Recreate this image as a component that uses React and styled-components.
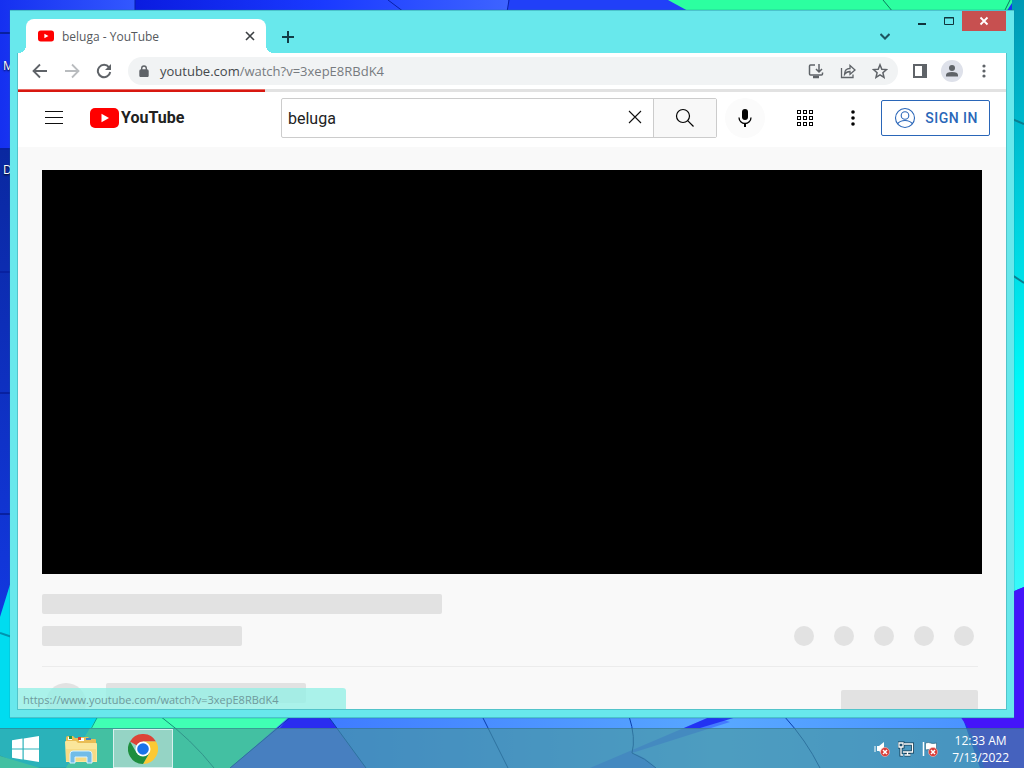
import React from "react";
import styled, { createGlobalStyle } from "styled-components";

const ui = `"Open Sans", "Noto Sans", sans-serif`;
const roboto = `Roboto, "Liberation Sans", sans-serif`;

const GlobalStyle = createGlobalStyle`
  *, *::before, *::after { box-sizing: border-box; }
  body { margin: 0; font-family: ${ui}; }
  button, input { font: inherit; color: inherit; margin: 0; padding: 0; border: 0; background: none; }
  button { cursor: pointer; }
  svg { display: block; flex: none; }
`;

const Desktop = styled.div`
  position: relative;
  display: flex;
  flex-direction: column;
  height: 100vh;
  overflow: hidden;
  background: #1a35f0;
`;

const Wallpaper = styled.svg`
  position: absolute;
  inset: 0;
  width: 100%;
  height: 100%;
`;

const Workspace = styled.div`
  position: relative;
  flex: 1;
  min-height: 0;
  padding: 10px;
  display: flex;
`;

const DesktopLabel = styled.span`
  position: absolute;
  left: 3px;
  top: ${(p) => p.$top}px;
  font-size: 12px;
  line-height: 16px;
  color: #fff;
  text-shadow: 0 1px 2px #000;
`;

const BrowserWindow = styled.main`
  position: relative;
  flex: 1;
  min-width: 0;
  display: flex;
  flex-direction: column;
  padding: 0 8px 8px;
  background: #68e8ec;
  border: solid #4cc3cc;
  border-width: 1px 0;
  box-shadow: 0 0 1px #1b7f8c;
`;

const TabStrip = styled.div`
  display: flex;
  align-items: flex-end;
  height: 42px;
  padding-left: 8px;
`;

const Tab = styled.div`
  position: relative;
  display: flex;
  align-items: center;
  width: 240px;
  height: 34px;
  padding: 0 8px 0 12px;
  border-radius: 8px 8px 0 0;
  background: #fff;
  font-size: 12px;
  color: #55595d;

  &::before,
  &::after {
    content: "";
    position: absolute;
    bottom: 0;
    width: 8px;
    height: 8px;
  }
  &::before {
    left: -8px;
    background: radial-gradient(circle at 0 0, transparent 8px, #fff 8px);
  }
  &::after {
    right: -8px;
    background: radial-gradient(circle at 100% 0, transparent 8px, #fff 8px);
  }
`;

const TabTitle = styled.span`
  flex: 1;
  margin-left: 8px;
`;

const IconButton = styled.button`
  display: flex;
  align-items: center;
  justify-content: center;
  flex: none;
  width: ${(p) => p.$size || 32}px;
  height: ${(p) => p.$size || 32}px;
  border-radius: 50%;
  color: ${(p) => p.$color || "#5f6368"};
  background: ${(p) => p.$fill || "none"};
`;

const NewTab = styled(IconButton)`
  margin-left: 6px;
`;

const TabSearch = styled(IconButton)`
  margin-left: auto;
  margin-right: 7px;
`;

const WindowControls = styled.div`
  display: flex;
  align-self: flex-start;
`;

const WindowButton = styled.button`
  display: flex;
  align-items: center;
  justify-content: center;
  width: ${(p) => (p.$close ? 44 : 27)}px;
  height: 20px;
  color: ${(p) => (p.$close ? "#fff" : "#10343c")};
  background: ${(p) => (p.$close ? "#c75050" : "none")};
`;

const Client = styled.div`
  position: relative;
  flex: 1;
  min-height: 0;
  display: flex;
  flex-direction: column;
  overflow: hidden;
  background: #f9f9f9;
  box-shadow: 0 0 0 1px #52c4ca;
  clip-path: inset(0 -1px -1px -1px);
`;

const Toolbar = styled.div`
  display: flex;
  align-items: center;
  flex: none;
  height: 36px;
  padding: 0 6px;
  background: #fff;
`;

const Omnibox = styled.div`
  flex: 1;
  display: flex;
  align-items: center;
  height: 28px;
  margin: 0 6px 0 8px;
  padding-right: 2px;
  border-radius: 14px;
  background: #f1f3f4;
  color: #5f6368;
`;

const LockSlot = styled.span`
  display: flex;
  justify-content: center;
  width: 32px;
`;

const Address = styled.div`
  flex: 1;
  font-size: 13px;
  line-height: 20px;
  color: #777b80;
  white-space: nowrap;
`;

const Domain = styled.span`
  color: #45494d;
`;

const Avatar = styled.span`
  display: flex;
  align-items: center;
  justify-content: center;
  width: 22px;
  height: 22px;
  border-radius: 50%;
  background: #dee1ea;
`;

const Masthead = styled.header`
  position: relative;
  flex: none;
  display: flex;
  align-items: center;
  gap: 8px;
  height: 58px;
  padding: 0 16px;
  background: #fff;
  font-family: ${roboto};
`;

const Progress = styled.div`
  position: absolute;
  left: 0;
  right: 0;
  top: 0;
  height: 3px;
  background: #e2e2e2;

  &::after {
    content: "";
    display: block;
    width: 25%;
    height: 100%;
    background: linear-gradient(#e86a64 1px, #d81810 1px);
  }
`;

const Logo = styled.a`
  display: flex;
  align-items: center;
  gap: 2px;
  width: 91px;
  margin-left: 8px;
  color: #212121;
  text-decoration: none;
`;

const Wordmark = styled.span`
  font-weight: 700;
  font-size: 16px;
  line-height: 24px;
`;

const Search = styled.form`
  flex: 1;
  display: flex;
  height: 40px;
  margin-left: 92px;
  border: 1px solid #ccc;
  border-radius: 2px;
`;

const SearchField = styled.input`
  flex: 1;
  min-width: 0;
  padding: 0 6px;
  font-size: 16px;
  color: #222;
  outline: 0;
`;

const SearchButton = styled.button`
  display: flex;
  align-items: center;
  justify-content: center;
  width: 63px;
  border-left: 1px solid #ccc;
  background: #f8f8f8;
`;

const MastheadEnd = styled.div`
  display: flex;
  align-items: center;
  gap: 8px;
  margin-left: 12px;
`;

const SignIn = styled.a`
  display: flex;
  align-items: center;
  gap: 8px;
  height: 36px;
  padding: 0 11px;
  border: 1px solid #2a66b8;
  border-radius: 2px;
  color: #2a66b8;
  font-size: 14px;
  font-weight: 500;
  letter-spacing: 0.5px;
  text-decoration: none;
  white-space: nowrap;
`;

const WatchPage = styled.section`
  flex: none;
  display: flex;
  flex-direction: column;
  padding: 23px 24px 0;
`;

const Player = styled.div`
  aspect-ratio: 235 / 101;
  background: #000;
`;

const TitleBone = styled.div`
  height: 20px;
  width: ${(p) => p.$width}px;
  border-radius: 2px;
  background: #e2e2e2;
`;

const MetaRow = styled.div`
  display: flex;
  justify-content: space-between;
  margin-top: 12px;
`;

const Title = styled(TitleBone)`
  margin-top: 20px;
`;

const Actions = styled.div`
  display: flex;
  gap: 20px;
  padding-right: 8px;
`;

const ActionBone = styled.span`
  width: 20px;
  height: 20px;
  border-radius: 50%;
  background: #e2e2e2;
`;

const OwnerRow = styled.div`
  display: flex;
  align-items: flex-start;
  margin: 20px 4px 0 0;
  padding: 16px 0 0 4px;
  border-top: 1px solid #ececec;
`;

const OwnerAvatar = styled.span`
  width: 40px;
  height: 40px;
  margin-right: 20px;
  border-radius: 50%;
  background: #e2e2e2;
`;

const SubscribeBone = styled.span`
  width: 137px;
  height: 36px;
  margin: 7px 0 0 auto;
  border-radius: 2px;
  background: #e2e2e2;
`;

const StatusBubble = styled.div`
  position: absolute;
  left: 0;
  bottom: 0;
  width: 328px;
  height: 21px;
  padding-left: 5px;
  border-radius: 0 3px 0 0;
  background: rgba(150, 240, 230, 0.8);
  font-size: 11px;
  line-height: 23px;
  color: #6f9a9c;
  white-space: nowrap;
`;

const Taskbar = styled.nav`
  position: relative;
  flex: none;
  display: flex;
  align-items: center;
  height: 40px;
  border-top: 1px solid rgba(40, 90, 120, 0.35);
  background: rgba(70, 150, 150, 0.6);
`;

const TaskButton = styled.button`
  display: flex;
  align-items: center;
  justify-content: center;
  width: ${(p) => p.$width}px;
  height: 39px;
  border: ${(p) => (p.$active ? "1px solid #d8f0ee" : "0")};
  background: ${(p) => (p.$active ? "rgba(205, 225, 220, 0.6)" : "none")};
`;

const Tray = styled.div`
  display: flex;
  align-items: center;
  gap: 8px;
  margin-left: auto;
  padding-right: 15px;
`;

const Clock = styled.time`
  margin-left: 6px;
  font-size: 12px;
  line-height: 17px;
  text-align: center;
  color: #fff;
`;

function WallpaperArt() {
  return (
    <Wallpaper viewBox="0 0 1024 768" preserveAspectRatio="none" aria-hidden="true">
      <defs>
        <linearGradient id="top1"><stop offset="0" stopColor="#1530f0" /><stop offset="1" stopColor="#3358ff" /></linearGradient>
        <linearGradient id="top2"><stop offset="0" stopColor="#0a1be0" /><stop offset=".5" stopColor="#1a3aff" /><stop offset="1" stopColor="#3e64ff" /></linearGradient>
        <linearGradient id="left" x1="0" y1="0" x2="0" y2="1"><stop offset="0" stopColor="#0a28a0" /><stop offset="1" stopColor="#1238e0" /></linearGradient>
        <linearGradient id="right" x1="0" y1="0" x2="0" y2="1"><stop offset="0" stopColor="#0098b4" /><stop offset=".3" stopColor="#00c8d8" /><stop offset=".65" stopColor="#00f8f8" /><stop offset="1" stopColor="#38f8fa" /></linearGradient>
        <linearGradient id="low"><stop offset="0" stopColor="#3f7cff" /><stop offset=".6" stopColor="#58a8ff" /><stop offset="1" stopColor="#4a92ff" /></linearGradient>
      </defs>
      <path d="M0 0H135V12H12V149H0Z" fill="url(#top1)" />
      <path d="M135 0H510V12H135Z" fill="url(#top2)" />
      <path d="M508 0H672L690 12H508Z" fill="#2140f8" />
      <path d="M668 0H1014L1006 12H690Z" fill="#2cffa0" />
      <path d="M1012 0H1024V587L1012 592Z" fill="url(#right)" />
      <path d="M1012 119L1024 124M1012 275L1024 283" stroke="#0a7f90" strokeWidth="2" />
      <path d="M1010 0L1004 12M883 0L893 12" stroke="#0b7a5c" strokeWidth="1" />
      <path d="M388 0L404 12M509 0L507 12M135 0V12" stroke="#0820a8" strokeWidth="1" />
      <path d="M0 149H12V583L0 617Z" fill="url(#left)" />
      <path d="M0 33H12M0 149H12M0 272H12M0 393H12M0 514H12" stroke="#0820a0" strokeWidth="2" />
      <path d="M0 617L12 578V700H110V768H0Z" fill="#00dcf0" />
      <path d="M0 633L12 637" stroke="#0094b0" strokeWidth="2" />
      <path d="M98 716H292L230 768H66Z" fill="#40ffb4" />
      <path d="M0 756L30 768H70L98 716" fill="none" stroke="#0a9f98" strokeWidth="1" />
      <path d="M0 756L40 768H0Z" fill="#40ffb4" />
      <path d="M66 768L90 728H120V768Z" fill="#40ffb4" />
      <path d="M160 716Q192 740 214 768" fill="none" stroke="#129078" strokeWidth="1" />
      <path d="M290 716H330L366 768H230Z" fill="#4a5cff" />
      <path d="M290 716H330L338 728H280Z" fill="#2a2cf0" />
      <path d="M328 716H962L980 768H366Z" fill="url(#low)" />
      <path d="M712 716L590 768H656Q645 756 632 753L730 722Z" fill="#3c66ff" opacity=".7" />
      <path d="M712 716H740L700 728H684Z" fill="#1a20f0" opacity=".8" />
      <path d="M292 716L230 768M328 716L366 768M482 716L508 768M629 716Q636 738 632 753M632 753Q645 758 656 768M784 716Q806 740 820 768" fill="none" stroke="#0a3eac" strokeWidth="1" />
      <path d="M1012 592L1024 587V768H984Q978 740 960 716H1012Z" fill="#4414fa" />
    </Wallpaper>
  );
}

const YouTubeMark = ({ width, height }) => (
  <svg width={width} height={height} viewBox="0 0 29 20" aria-hidden="true">
    <rect width="29" height="20" rx="5" fill="#f00" />
    <path d="M11.5 5.7v8.6L19 10z" fill="#fff" />
  </svg>
);

const Icon = ({ size = 16, box = 16, width = 2, children }) => (
  <svg width={size} height={size} viewBox={`0 0 ${box} ${box}`} fill="none" stroke="currentColor" strokeWidth={width} aria-hidden="true">
    {children}
  </svg>
);

const dots = [3, 8, 13];

export default function App() {
  return (
    <>
      <GlobalStyle />
      <Desktop>
        <WallpaperArt />
        <Workspace>
          <DesktopLabel $top={58}>M</DesktopLabel>
          <DesktopLabel $top={162}>D</DesktopLabel>
          <BrowserWindow>
            <TabStrip>
              <Tab>
                <YouTubeMark width={16} height={12} />
                <TabTitle>beluga - YouTube</TabTitle>
                <IconButton $size={16} $color="#3c4043" aria-label="Close tab">
                  <Icon size={10} box={10} width={1.6}><path d="M1 1l8 8M9 1L1 9" /></Icon>
                </IconButton>
              </Tab>
              <NewTab $color="#123c46" aria-label="New tab">
                <Icon size={12} box={12}><path d="M6 0v12M0 6h12" /></Icon>
              </NewTab>
              <TabSearch $color="#1c5560" aria-label="Search tabs">
                <Icon size={10} box={10}><path d="M.5 2L5 6.500l4.500-4.500" /></Icon>
              </TabSearch>
              <WindowControls>
                <WindowButton aria-label="Minimize">
                  <Icon size={12} box={12}><path d="M2 9h8" /></Icon>
                </WindowButton>
                <WindowButton aria-label="Maximize">
                  <Icon size={12} box={12} width={1}><path d="M1.500 2.500h9v7h-9zM1 3h10" /></Icon>
                </WindowButton>
                <WindowButton $close aria-label="Close">
                  <Icon size={10} box={10} width={1.800}><path d="M1.500 1.500l7 7M8.500 1.500l-7 7" /></Icon>
                </WindowButton>
              </WindowControls>
            </TabStrip>
            <Client>
              <Toolbar>
                <IconButton aria-label="Back"><Icon width={1.800}><path d="M15 8H2M8 1.500L1.500 8 8 14.500" /></Icon></IconButton>
                <IconButton $color="#b9bcbf" aria-label="Forward"><Icon width={1.800}><path d="M1 8h13M8 1.500L14.500 8 8 14.500" /></Icon></IconButton>
                <IconButton aria-label="Reload">
                  <Icon><path d="M13 4.300A6.200 6.200 0 1 0 14.200 9" /><path d="M15 1v6H9z" fill="currentColor" stroke="none" /></Icon>
                </IconButton>
                <Omnibox>
                  <LockSlot>
                    <Icon size={12} box={12} width={1.400}><rect x="2" y="5" width="8" height="6.500" rx="1" fill="currentColor" /><path d="M3.700 5V3.300a2.300 2.300 0 0 1 4.600 0V5" /></Icon>
                  </LockSlot>
                  <Address><Domain>youtube.com</Domain>/watch?v=3xepE8RBdK4</Address>
                  <IconButton aria-label="Install">
                    <Icon width={1.500}><path d="M7 2H2.500Q1.500 2 1.500 3v8q0 1 1 1h11q1 0 1-1V9.500M11 1v7.500M8 6l3 3 3-3" /><path d="M5 14h6" strokeWidth="2.500" /></Icon>
                  </IconButton>
                  <IconButton aria-label="Share">
                    <Icon width={1.300}><path d="M1.500 5v9.500h11.500V11.500M4.500 11.500Q4.500 5.500 10 5.500V2.500L15 7l-5 4.300V8.500Q6.500 8.500 4.500 11.500z" /></Icon>
                  </IconButton>
                  <IconButton aria-label="Bookmark">
                    <Icon width={1.500}><path d="M8 1.800l1.800 4.400 4.700.4-3.600 3.100 1.100 4.600L8 11.800l-4 2.500 1.100-4.600L1.500 6.600l4.700-.4z" /></Icon>
                  </IconButton>
                </Omnibox>
                <IconButton aria-label="Side panel">
                  <Icon size={14} box={14}><rect x="1" y="1" width="12" height="12" /><path d="M9 1h4v12H9z" fill="currentColor" stroke="none" /></Icon>
                </IconButton>
                <IconButton aria-label="Profile">
                  <Avatar><Icon size={14} box={14}><g fill="currentColor" stroke="none"><circle cx="7" cy="4" r="3" /><path d="M1 12.500V11q0-3 6-3t6 3v1.500z" /></g></Icon></Avatar>
                </IconButton>
                <IconButton aria-label="Chrome menu">
                  <Icon>{dots.map((y) => <circle key={y} cx="8" cy={y} r="1.600" fill="currentColor" stroke="none" />)}</Icon>
                </IconButton>
              </Toolbar>

              <Masthead>
                <Progress />
                <IconButton $size={40} $color="#0f0f0f" aria-label="Guide">
                  <Icon size={18} box={18} width={1}><path d="M0 2.500h18M0 8.500h18M0 14.500h18" /></Icon>
                </IconButton>
                <Logo href="#home" aria-label="YouTube home">
                  <YouTubeMark width={29} height={20} />
                  <Wordmark>YouTube</Wordmark>
                </Logo>
                <Search onSubmit={(e) => e.preventDefault()}>
                  <SearchField aria-label="Search" defaultValue="beluga" />
                  <IconButton type="button" $size={36} $color="#111" aria-label="Clear">
                    <Icon size={14} box={14} width={1.100}><path d="M1 1l12 12M13 1L1 13" /></Icon>
                  </IconButton>
                  <SearchButton aria-label="Search">
                    <Icon size={20} box={20} width={1.200}><circle cx="8" cy="8" r="6.500" /><path d="M12.700 12.700L18.500 18.500" /></Icon>
                  </SearchButton>
                </Search>
                <IconButton $size={40} $color="#030303" $fill="#fbfbfb" aria-label="Voice search">
                  <Icon size={20} box={20} width={1.300}><rect x="7" y="1" width="6" height="11" rx="3" fill="currentColor" stroke="none" /><path d="M4 9.500a6 6 0 0 0 12 0M10 15.500V19" /><path d="M10 15.500V19" strokeWidth="2" /></Icon>
                </IconButton>
                <MastheadEnd>
                  <IconButton $size={40} $color="#030303" aria-label="Apps">
                    <Icon size={16} box={16} width={1}>
                      {[0, 6, 12].map((y) => [0, 6, 12].map((x) => <rect key={`${x}-${y}`} x={x + 0.5} y={y + 0.5} width="3" height="3" />))}
                    </Icon>
                  </IconButton>
                  <IconButton $size={40} $color="#030303" aria-label="Settings">
                    <Icon>{[2, 8, 14].map((y) => <circle key={y} cx="8" cy={y} r="1.800" fill="currentColor" stroke="none" />)}</Icon>
                  </IconButton>
                  <SignIn href="#signin">
                    <Icon size={24} box={24} width={1.100}><circle cx="12" cy="12" r="9.500" /><circle cx="12" cy="9.500" r="3.800" /><path d="M4.500 17.800Q7 14.500 12 14.500t7.500 3.300" /></Icon>
                    SIGN IN
                  </SignIn>
                </MastheadEnd>
              </Masthead>

              <WatchPage>
                <Player />
                <Title $width={400} />
                <MetaRow>
                  <TitleBone $width={200} />
                  <Actions>{[0, 1, 2, 3, 4].map((n) => <ActionBone key={n} />)}</Actions>
                </MetaRow>
                <OwnerRow>
                  <OwnerAvatar />
                  <TitleBone $width={200} />
                  <SubscribeBone />
                </OwnerRow>
              </WatchPage>
              <StatusBubble>https://www.youtube.com/watch?v=3xepE8RBdK4</StatusBubble>
            </Client>
          </BrowserWindow>
        </Workspace>

        <Taskbar>
          <TaskButton $width={49} aria-label="Start">
            <svg width="28" height="26" viewBox="0 0 28 26" fill="#fff" aria-hidden="true"><path d="M1 4.200l10.500-1.600v9.800H1zM12.700 2.400L28 0v12.400H12.700zM1 13.600h10.500v9.800L1 21.800zM12.700 13.600H28V26l-15.300-2.400z" /></svg>
          </TaskButton>
          <TaskButton $width={64} aria-label="File Explorer">
            <svg width="34" height="30" viewBox="0 0 34 30" aria-hidden="true">
              <path d="M2 4q0-2 2-2h5l2 2h4V3h9l2 2h5q1 0 1 1v19H2z" fill="#e9bd55" />
              <path d="M4 3h4v3H4zM15 4h5v3h-5z" fill="#fff" />
              <path d="M5 2h3v3H5z" fill="#279b45" /><path d="M14 3h3v3h-3z" fill="#d64032" /><path d="M22 4h5v2h-5z" fill="#3f83c5" />
              <path d="M1 8q0-1 1-1h10l2 2h18q1 0 1 1v18H2z" fill="#fae69b" />
              <path d="M2 15h30v12H2z" fill="#f3d477" opacity=".6" />
              <path d="M6 29V20q0-3 3-3h16q3 0 3 3v9h-5v-6H11v6z" fill="#72bce8" stroke="#d8f2ff" />
            </svg>
          </TaskButton>
          <TaskButton $width={60} $active aria-label="Google Chrome">
            <svg width="30" height="30" viewBox="0 0 30 30" aria-hidden="true">
              <path d="M15 15L2 7.500A15 15 0 0 1 28 7.500H15z" fill="#dc4437" />
              <path d="M15 7.500H28A15 15 0 0 1 15 30l6.500-11.250z" fill="#fcc934" />
              <path d="M2 7.500A15 15 0 0 0 15 30l6.500-11.250L15 15l-6.500 3.750z" fill="#1e8e3e" />
              <circle cx="15" cy="15" r="7.500" fill="#fff" /><circle cx="15" cy="15" r="5.800" fill="#1a73e8" />
            </svg>
          </TaskButton>
          <Tray>
            <svg width="16" height="16" viewBox="0 0 16 16" role="img" aria-label="Volume muted">
              <path d="M3 5h2l5-4v13l-5-4H3z" fill="#fff" /><path d="M1 5v6" stroke="#fff" />
              <circle cx="11" cy="11" r="4.500" fill="#d83b36" stroke="#f6c8c4" strokeWidth=".6" /><path d="M9 9l4 4M13 9l-4 4" stroke="#fff" strokeWidth="1.500" />
            </svg>
            <svg width="16" height="16" viewBox="0 0 16 16" role="img" aria-label="Network">
              <g fill="none" stroke="#123d55" strokeWidth="3"><path d="M6 3h8.500v8H5M9.500 11v3M6.500 14h6M1 2h4v4H1zM3 6v8h2" /></g>
              <g fill="none" stroke="#fff" strokeWidth="1.300"><path d="M6 3h8.500v8H5M9.500 11v3M6.500 14h6M1 2h4v4H1zM3 6v8h2" /></g>
            </svg>
            <svg width="16" height="16" viewBox="0 0 16 16" role="img" aria-label="Action Center">
              <path d="M1.500 1v14" stroke="#fff" strokeWidth="1.500" /><path d="M3.500 2q3-1 5 0t6 0v7q-4 1-6 0t-5 0z" fill="#fff" stroke="#245c76" strokeWidth=".6" />
              <circle cx="11" cy="11" r="4.500" fill="#d83b36" stroke="#f6c8c4" strokeWidth=".6" /><path d="M9 9l4 4M13 9l-4 4" stroke="#fff" strokeWidth="1.500" />
            </svg>
            <Clock dateTime="2022-07-13T00:33">12:33 AM<br />7/13/2022</Clock>
          </Tray>
        </Taskbar>
      </Desktop>
    </>
  );
}
